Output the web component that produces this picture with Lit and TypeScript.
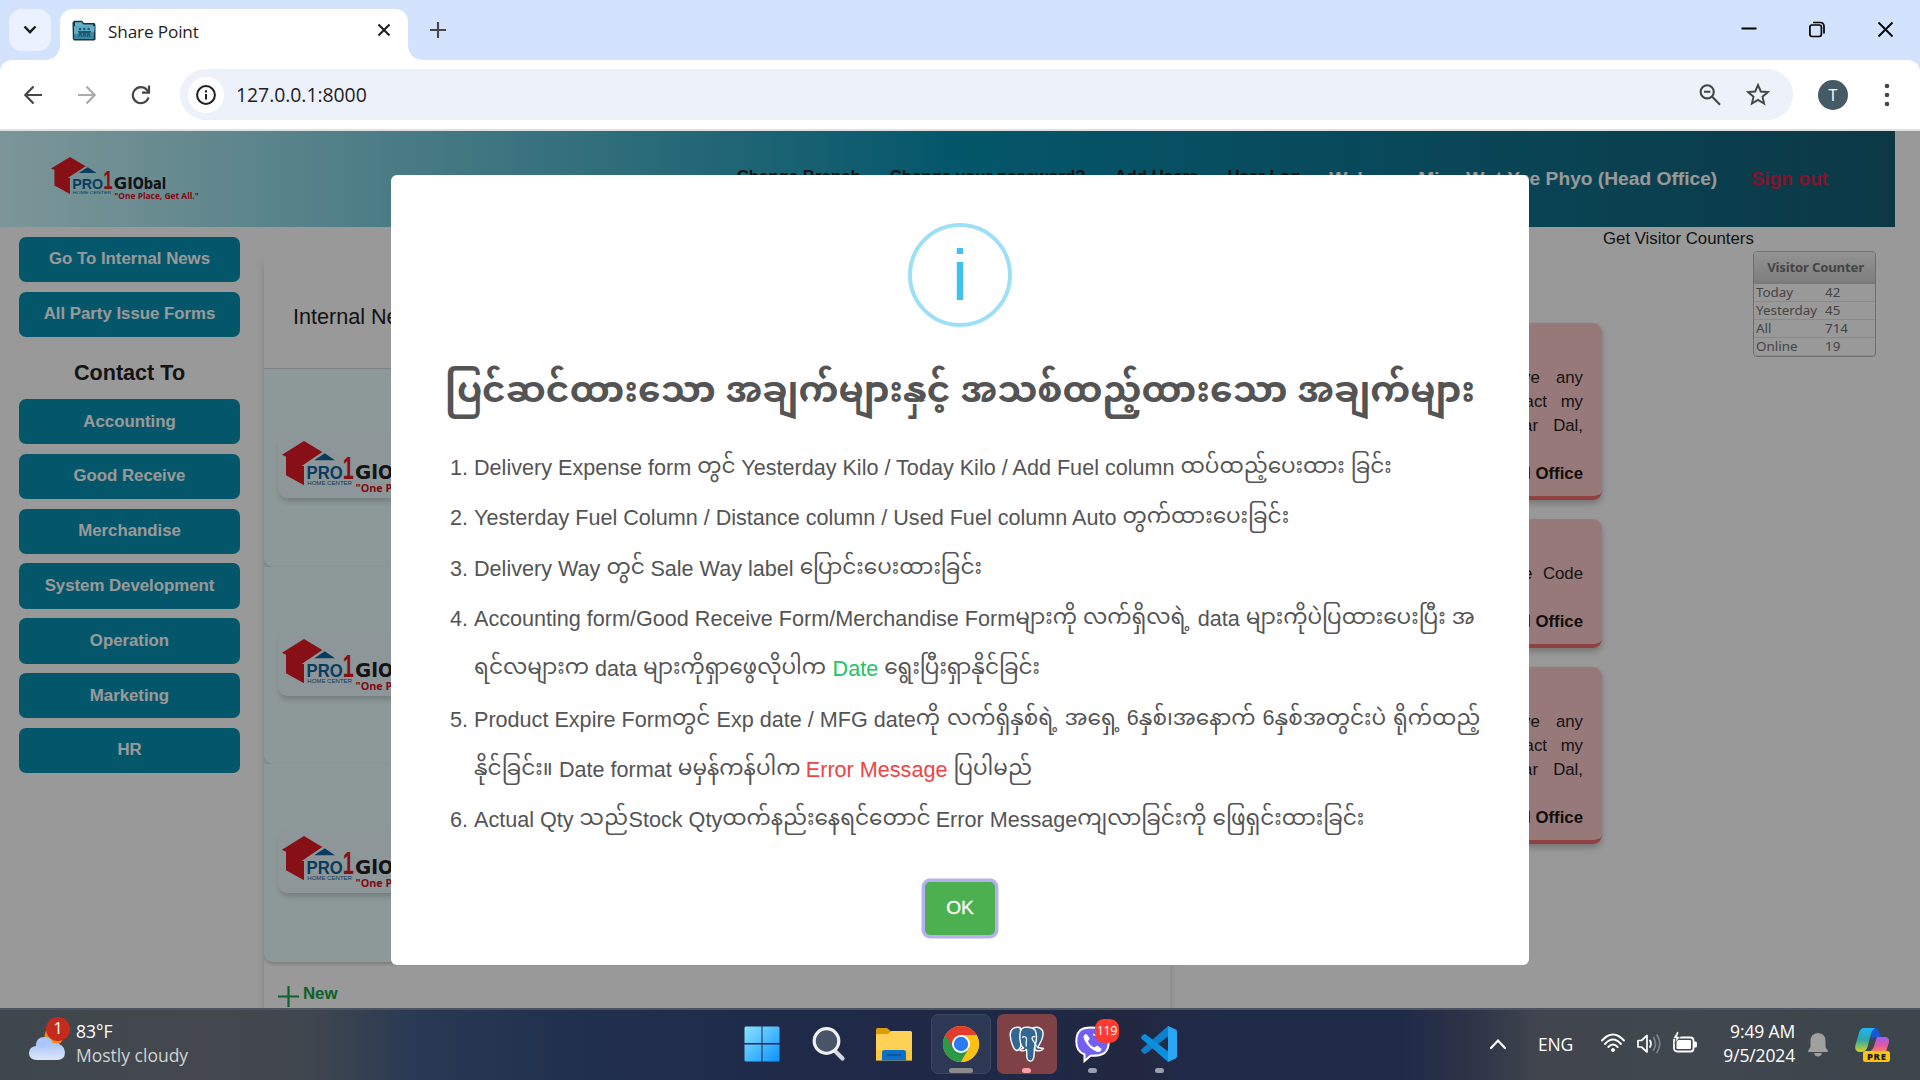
import { LitElement, html, css, svg, nothing } from "lit";
import { customElement, property } from "lit/decorators.js";
import { styleMap } from "lit/directives/style-map.js";
import { classMap } from "lit/directives/class-map.js";

/* ---------- brand logo ---------- */
@customElement("pro-logo")
class ProLogo extends LitElement {
  @property({ type: Boolean }) wide = false;
  static styles = css`
    :host { display: block; }
    svg { display: block; width: 100%; height: 100%; overflow: visible; }
    .pro { font: 700 17.6px "Liberation Sans", sans-serif; fill: #10649f; }
    .one { font: 700 32px "Liberation Sans", sans-serif; fill: #e01b25; }
    .home { font: 400 5.2px "Liberation Sans", sans-serif; fill: #10649f; }
    .global { font: 700 19px "DejaVu Sans", sans-serif; fill: #222226; }
    .tag { font: 700 11px "Open Sans", sans-serif; fill: #d6101c; }
  `;
  render() {
    const w = this.wide;
    return html`<svg viewBox="0 0 172 54" preserveAspectRatio="none">
      <path fill="#e01b25" d="M0 13.7 22 0 40.3 11 19.7 25H22V44.3L4 34.3V15.7Z" />
      <path fill="#10649f" d="M32.3 19.3 42.7 12.3 53 19.3Z" />
      <text class="pro" x="24.6" y="38.4" textLength="36" lengthAdjust="spacingAndGlyphs">PRO</text>
      <text class="one" x="60.8" y="38.4" textLength="11" lengthAdjust="spacingAndGlyphs">1</text>
      <text class="home" x="25.3" y="44" textLength="44.7" lengthAdjust="spacingAndGlyphs">HOME CENTER</text>
      <text class="global" x="73" y="38.4" textLength=${w ? 23 : 22} lengthAdjust="spacingAndGlyphs">Gl</text>
      <text class="global" x=${w ? 96 : 95} y="38.4" textLength=${w ? 46 : 39} lengthAdjust="spacingAndGlyphs">Obal</text>
      <text class="tag" x="73.6" y="51" textLength=${w ? 108 : 98} lengthAdjust="spacingAndGlyphs">"One Place, Get All."</text>
    </svg>`;
  }
}

/* ---------- browser chrome ---------- */
@customElement("browser-chrome")
class BrowserChrome extends LitElement {
  static styles = css`
    :host { display: block; font-family: "Open Sans", "Noto Sans", sans-serif; color: #1f1f1f; }
    svg { display: block; }
    .strip { height: 60px; background: #d3e3fd; display: flex; align-items: flex-start; box-sizing: border-box; padding: 9px 0 0 9px; }
    .search { width: 42px; height: 42px; border-radius: 13px; background: #ebf1fe; display: grid; place-items: center; margin-right: 9px; }
    .tab { position: relative; width: 348px; height: 51px; background: #fff; border-radius: 13px 13px 0 0; box-sizing: border-box; padding: 0 17px 9px 12px; display: flex; align-items: center; }
    .tab::before, .tab::after { content: ""; position: absolute; bottom: 0; width: 14px; height: 14px; }
    .tab::before { right: 100%; background: radial-gradient(circle at 0 0, transparent 13.5px, #fff 14px); }
    .tab::after { left: 100%; background: radial-gradient(circle at 100% 0, transparent 13.5px, #fff 14px); }
    .title { font-size: 17.2px; line-height: 24px; margin: 3px 0 0 12px; flex: 1; letter-spacing: -0.15px; }
    .plus { margin: 13px 0 0 22px; }
    .spacer { flex: 1; }
    .win { display: flex; gap: 51px; margin: 12px 26px 0 0; }
    .bar { height: 69px; background: #fff; border-bottom: 2px solid #dfe0e0; display: flex; align-items: center; border-radius: 12px 12px 0 0; }
    .barwrap { background: linear-gradient(#d3e3fd 30px, #fff 30px); }
    .nav { display: flex; gap: 34px; width: 180px; box-sizing: border-box; padding-left: 23px; }
    .omni { width: 1613px; height: 51px; border-radius: 26px; background: #ecf1fa; display: flex; align-items: center; box-sizing: border-box; padding: 0 23px 0 8px; }
    .info { width: 36px; height: 36px; border-radius: 50%; background: #fff; display: grid; place-items: center; }
    .url { flex: 1; font-size: 19.4px; margin: -1px 0 0 12px; letter-spacing: -0.04px; }
    .tools { display: flex; gap: 24px; }
    .avatar { width: 30px; height: 30px; margin-left: 25px; border-radius: 50%; background: #455a64; color: #fff; display: grid; place-items: center; font-size: 16px; }
    .dots { margin-left: 36px; }
  `;
  render() {
    const s = "#444746";
    return html`
      <div class="strip">
        <div class="search"><svg width="14" height="10" viewBox="0 0 14 10" fill="none" stroke="#1f1f1f" stroke-width="2.5"><path d="M1.5 1.5 7 7.2 12.5 1.5" /></svg></div>
        <div class="tab">
          <svg width="24" height="21" viewBox="0 0 24 21">
            <path d="M.5 2.5 2 .8H10L12 3H22.5L23.5 5V19.5Q23 20.5 22 20.5H2L.8 19Z" fill="#17333f" />
            <path d="M3 2.3H9.5L11.5 4.5H21V7H3Z" fill="#5fb3cb" />
            <path d="M2 6.3H22.6L21.7 19H2.2Z" fill="#3d8aa5" />
            <path d="M2 6.3H22.6L22.2 12 2.1 14Z" fill="#62aec5" />
            <g fill="#1d566d"><circle cx="8" cy="9" r="1.3" /><circle cx="12.3" cy="9" r="1.3" /><circle cx="16.6" cy="9" r="1.3" />
            <path d="M6 11h13v1.6h-1.3l.6 4.4h-1.2l-.5-3-.6 3h-1.2l.4-4h-1.5l.4 4h-1.1l-.6-3-.6 3h-1.1l.4-4H9.600l.4 4H8.800l-.6-3-.6 3H6.400l.6-4.400H6z" /></g>
          </svg>
          <span class="title">Share Point</span>
          <svg width="14" height="14" viewBox="0 0 14 14" stroke="#1f1f1f" stroke-width="2.1"><path d="M1.500 1.500 12.500 12.500M12.500 1.500 1.500 12.500" /></svg>
        </div>
        <svg class="plus" width="16" height="16" viewBox="0 0 16 16" stroke="#444746" stroke-width="2.100"><path d="M8 0V16M0 8H16" /></svg>
        <span class="spacer"></span>
        <div class="win">
          <svg width="17" height="17" viewBox="0 0 17 17"><path d="M.500 7.500H15.500" stroke="#000" stroke-width="2" /></svg>
          <svg width="17" height="17" viewBox="0 0 17 17" fill="none" stroke="#000" stroke-width="1.700"><rect x=".900" y="4" width="11.500" height="11.500" rx="2.200" /><path d="M4 1.500H11Q15 1.500 15 5.500V12.500" /></svg>
          <svg width="17" height="17" viewBox="0 0 17 17" stroke="#000" stroke-width="1.800"><path d="M1.500 1.500 15.500 15.500M15.500 1.500 1.500 15.500" /></svg>
        </div>
      </div>
      <div class="barwrap"><div class="bar">
        <div class="nav">
          <svg width="20" height="20" viewBox="0 0 20 20" fill="none" stroke=${s} stroke-width="2.200"><path d="M19 10H2.500M10.500 1.500 2.300 10 10.500 18.500" /></svg>
          <svg width="20" height="20" viewBox="0 0 20 20" fill="none" stroke="#ababab" stroke-width="2.200"><path d="M1 10H17.500M9.500 1.500 17.700 10 9.500 18.500" /></svg>
          <svg width="20" height="20" viewBox="0 0 20 20" fill="none" stroke=${s} stroke-width="2.200"><path d="M17.500 12.500A8 8 0 1 1 16 5L18 7.200" /><path d="M18 .5V7.600H11" /></svg>
        </div>
        <div class="omni">
          <div class="info"><svg width="20" height="20" viewBox="0 0 20 20"><circle cx="10" cy="10" r="8.900" fill="none" stroke="#1f1f1f" stroke-width="2" /><path d="M10 9V14.500M10 5.300V7.400" stroke="#1f1f1f" stroke-width="2" /></svg></div>
          <span class="url">127.0.0.1:8000</span>
          <div class="tools">
            <svg width="24" height="24" viewBox="0 0 24 24" fill="none" stroke=${s} stroke-width="2.100"><circle cx="9.200" cy="8.800" r="6.600" /><path d="M14 13.600 22 21.800M6 8.800H12.400" /></svg>
            <svg width="24" height="24" viewBox="0 0 24 24" fill="none" stroke=${s} stroke-width="1.900"><path d="M12 2 14.800 8.500 21.800 9.100 16.500 13.700 18.100 20.500 12 16.900 5.900 20.500 7.500 13.700 2.200 9.100 9.200 8.500Z" /></svg>
          </div>
        </div>
        <div class="avatar">T</div>
        <svg class="dots" width="6" height="24" viewBox="0 0 6 24" fill=${s}><circle cx="3" cy="3" r="2.300" /><circle cx="3" cy="12" r="2.300" /><circle cx="3" cy="21" r="2.300" /></svg>
      </div></div>`;
  }
}

/* ---------- page behind the dialog ---------- */
const COUNTERS = [["Today", "42"], ["Yesterday", "45"], ["All", "714"], ["Online", "19"]];
const DEPARTMENTS = ["Accounting", "Good Receive", "Merchandise", "System Development", "Operation", "Marketing", "HR"];
type Line = { text: string; gap: number };
const LONG_NOTE: Line[] = [{ text: "have any", gap: 11.5 }, { text: "contact my", gap: 9 }, { text: "Zar Dal,", gap: 10.5 }];
const NOTICES: { height: number; lines: Line[] }[] = [
  { height: 177, lines: LONG_NOTE },
  { height: 129, lines: [{ text: "the Code", gap: 6 }] },
  { height: 177, lines: LONG_NOTE },
];

@customElement("portal-page")
class PortalPage extends LitElement {
  static styles = css`
    :host { display: block; font: 16.8px/24px "Liberation Sans", Arial, sans-serif; color: #222; background: #fff; }
    .header { width: 1895px; height: 96px; box-sizing: border-box; display: flex; align-items: center; padding: 0 67px 0 51px; background: linear-gradient(to right, #cffafe, #0891b2, #155e75); font-weight: 700; }
    .brand { width: 148px; height: 45px; }
    .links { display: flex; gap: 29px; margin-left: auto; margin-right: 29px; color: #222; padding-bottom: 4px; }
    .welcome { font-size: 19.2px; color: #fff; margin-right: 34px; padding-bottom: 1px; }
    .out { font-size: 19.2px; color: #e11d48; padding-bottom: 1px; }
    .body { display: flex; align-items: flex-start; height: 781px; overflow: hidden; }
    .side { width: 221px; margin: 10px 24px 0 19px; display: flex; flex-direction: column; font-weight: 700; }
    .btn { height: 45.300px; margin-bottom: 9.500px; border-radius: 7px; background: #0891b2; color: #fff; display: flex; align-items: center; justify-content: center; box-sizing: border-box; padding-bottom: .4px; }
    .btn:first-child { padding-bottom: 2px; }
    .contact { font-size: 21.6px; text-align: center; height: 52.500px; line-height: 52px; }
    .news { width: 906px; margin-top: 29px; height: 780px; box-shadow: 0 7px 7px rgba(0,0,0,.16); }
    .newshead { height: 113px; box-sizing: border-box; border-bottom: 1px solid #d6d8dc; padding: 49px 0 0 29px; font-size: 21.6px; }
    .row { height: 197.700px; box-sizing: border-box; background: #ecfeff; border-radius: 0 0 9px 9px; box-shadow: 0 2px 4px rgba(0,0,0,.2); padding: 64px 14px 0; }
    .wrap { overflow: hidden; padding-bottom: 4px; margin-bottom: -4px; background: linear-gradient(#ecfeff 580px, transparent 580px); }
    .plate { width: 200px; height: 65px; box-sizing: border-box; padding: 8px 4px; border-radius: 9px; background: #ecfbfd; box-shadow: 0 5px 6px -2px rgba(0,0,0,.2); }
    .plate pro-logo { width: 172px; height: 54px; }
    .new { display: flex; align-items: center; gap: 4px; color: #16a34a; font-weight: 700; padding: 20px 0 0 14px; height: 24px; }
    .new svg { margin-top: 4px; }
    .notices { width: 400px; margin: 96px 0 0 32px; display: flex; flex-direction: column; gap: 19px; }
    .notice { box-sizing: border-box; padding: 43px 19px 0; background: #fecaca; border-bottom: 4px solid #f26d6d; border-radius: 9px; box-shadow: 0 4px 6px rgba(0,0,0,.22); text-align: right; display: flex; flex-direction: column; }
    .office { margin-top: 24px; font-weight: 700; color: #161616; }
    .visits { display: flex; flex-direction: column; }
    .cap { line-height: 24px; padding-left: 1px; }
    .counter { align-self: flex-start; margin-left: 151px; width: 123px; height: 106px; box-sizing: border-box; border: 1.500px solid #b8b8b8; border-radius: 4px; overflow: hidden; font: 13.400px/16px "Noto Sans", sans-serif; color: #737373; }
    .chead { height: 32px; box-sizing: border-box; border-bottom: 2px solid #cacaca; background: linear-gradient(#f5f5f5, #d2d2d2); text-align: center; line-height: 31px; font-weight: 700; font-size: 13.200px; letter-spacing: -.2px; padding-left: 2px; }
    .crow { display: flex; padding-left: 2px; height: 18px; box-sizing: border-box; border-bottom: 1px solid #e4e4e4; }
    .crow span:first-child { width: 69px; }
  `;
  render() {
    return html`
      <div class="header">
        <pro-logo class="brand"></pro-logo>
        <div class="links"><span>Change Branch</span><span>Change your password?</span><span>Add Users</span><span>User Log</span></div>
        <span class="welcome">Welcome Miss Wut Yee Phyo (Head Office)</span>
        <span class="out">Sign out</span>
      </div>
      <div class="body">
        <div class="side">
          <div class="btn">Go To Internal News</div>
          <div class="btn">All Party Issue Forms</div>
          <div class="contact">Contact To</div>
          ${DEPARTMENTS.map((d) => html`<div class="btn">${d}</div>`)}
        </div>
        <div class="news">
          <div class="newshead">Internal News</div>
          <div class="wrap">${[0, 1, 2].map(() => html`<div class="row"><div class="plate"><pro-logo wide></pro-logo></div></div>`)}</div>
          <div class="new"><svg width="21" height="21" viewBox="0 0 21 21" stroke="#16a34a" stroke-width="2.200"><path d="M10.500 0V21M0 10.500H21" /></svg>New</div>
        </div>
        <div class="notices">
          ${NOTICES.map((n) => html`<div class="notice" style=${styleMap({ height: n.height + "px" })}>
            ${n.lines.map((l) => html`<span style=${styleMap({ wordSpacing: l.gap + "px" })}>${l.text}</span>`)}
            <span class="office">Head Office</span>
          </div>`)}
        </div>
        <div class="visits">
          <span class="cap">Get Visitor Counters</span>
          <div class="counter">
            <div class="chead">Visitor Counter</div>
            ${COUNTERS.map(([k, v]) => html`<div class="crow"><span>${k}</span><span>${v}</span></div>`)}
          </div>
        </div>
      </div>`;
  }
}

/* ---------- dialog ---------- */
type Run = { t: string; w?: number; tone?: "green" | "red"; gap?: number };
const my = (t: string, w: number, gap = 0): Run => ({ t, w, gap });
const en = (t: string, tone?: "green" | "red"): Run => ({ t, tone });
const ITEMS: Run[][][] = [
  [[en("Delivery Expense form "), my("တွင်", 44), en("Yesterday Kilo / Today Kilo / Add Fuel column "), my("ထပ်ထည့်ပေးထား ခြင်း", 211)]],
  [[en("Yesterday Fuel Column / Distance column / Used Fuel column Auto "), my("တွက်ထားပေးခြင်း", 166)]],
  [[en("Delivery Way "), my("တွင်", 44), en("Sale Way label "), my("ပြောင်းပေးထားခြင်း", 182)]],
  [
    [en("Accounting form/Good Receive Form/Merchandise Form"), my("များကို လက်ရှိလရဲ့", 182.5), en("data "), my("များကိုပဲပြထားပေးပြီး အ", 229)],
    [my("ရင်လများက", 121), en("data "), my("များကိုရှာဖွေလိုပါက", 189.5), en("Date ", "green"), my("ရွေးပြီးရှာနိုင်ခြင်း", 156)],
  ],
  [
    [en("Product Expire Form"), my("တွင်", 44.5), en("Exp date / MFG date"), my("ကို လက်ရှိနှစ်ရဲ့ အရှေ့ 6နှစ်၊အနောက် 6နှစ်အတွင်းပဲ ရိုက်ထည့်", 565, 0.9)],
    [my("နိုင်ခြင်း။", 85), en("Date format "), my("မမှန်ကန်ပါက", 128), en("Error Message ", "red"), my("ပြပါမည်", 78)],
  ],
  [[en("Actual Qty "), my("သည်", 49), en("Stock Qty"), my("ထက်နည်းနေရင်တောင်", 213.5), en("Error Message"), my("ကျလာခြင်းကို ဖြေရှင်းထားခြင်း", 287)]],
];

@customElement("notice-dialog")
class NoticeDialog extends LitElement {
  static styles = css`
    :host { display: block; width: 1138px; height: 790px; box-sizing: border-box; background: #fff; border-radius: 6px; padding-top: 48px; color: #545454; font-family: "Liberation Sans", "Noto Sans Myanmar", "Myanmar Text", Padauk, sans-serif; }
    .icon { width: 104px; height: 104px; box-sizing: border-box; margin: 0 auto; border: 4px solid #9de0f6; border-radius: 50%; color: #3fc3ee; font-size: 72px; line-height: 96px; text-align: center; }
    .title { margin-top: 31px; height: 64px; line-height: 64px; font-size: 36px; font-weight: 700; text-align: center; white-space: nowrap; }
    .list { margin: 21px 0 0; padding-left: 59px; font-size: 21.6px; }
    .item { display: flex; }
    .num { width: 24px; }
    .line { display: flex; height: 50.330px; line-height: 50px; white-space: pre; }
    .my { display: block; line-height: 46px; }
    .green { color: #22c55e; }
    .red { color: #ef4444; }
    .ok { width: 70px; height: 53px; margin: 36px auto 0; border-radius: 5px; background: #4caf50; box-shadow: 0 0 0 3.500px #b7b0f0; color: #fff; font-size: 19.200px; line-height: 51px; text-align: center; -webkit-text-stroke: .3px #fff; }
  `;
  render() {
    return html`
      <div class="icon">i</div>
      <div class="title">ပြင်ဆင်ထားသော အချက်များနှင့် အသစ်ထည့်ထားသော အချက်များ</div>
      <div class="list">
        ${ITEMS.map((lines, i) => html`<div class="item"><div class="num"><div class="line">${i + 1}.</div></div><div>
          ${lines.map((runs) => html`<div class="line">${runs.map((r) => html`<span class=${classMap({ my: !!r.w, green: r.tone === "green", red: r.tone === "red" })} style=${r.w ? styleMap({ width: r.w + "px", wordSpacing: (r.gap ?? 0) + "px" }) : nothing}>${r.t}</span>`)}</div>`)}
        </div></div>`)}
      </div>
      <div class="ok">OK</div>`;
  }
}

/* ---------- Windows taskbar ---------- */
const WINDOWS = svg`<defs><linearGradient id="w" x1="0" y1="0" x2="1" y2="1"><stop offset="0" stop-color="#8be3ff"/><stop offset="1" stop-color="#0a93ff"/></linearGradient></defs><path fill="url(#w)" d="M1.500.500H17.500V17H.500V1.500ZM18.500.500H34.500L35.500 1.500V17H18.500ZM.500 18.500H17.500V35.500H1.500L.500 34.500ZM18.500 18.500H35.500V34.500L34.500 35.500H18.500Z"/>`;
const SEARCH = svg`<path d="M25 25 32.500 32.500" stroke="#d6d8dc" stroke-width="4.200" stroke-linecap="round"/><circle cx="16.500" cy="15" r="12.300" fill="#4a5468" stroke="#eef0f2" stroke-width="3.200"/>`;
const FOLDER = svg`<path fill="#dd9b07" d="M0 3.500Q0 2 1.500 2H11L14.500 5V12H0Z"/><path fill="#ffd257" d="M0 8H12L15 5H34.500Q36 5 36 6.500V34.500H0Z"/><path fill="#f9be25" d="M0 24H36V33.500Q36 34.500 35 34.500H1Q0 34.500 0 33.500Z" opacity=".5"/><path fill="#0f6fc6" d="M6 34.500V26.500Q6 24 8.500 24H27.500Q30 24 30 26.500V34.500Z"/><path d="M11 29H25" stroke="#0a4f93" stroke-width="1.500"/>`;
const CHROME = svg`<circle cx="18" cy="18" r="18" fill="#fbc116"/><path fill="#2a9a48" d="M2.410 9A18 18 0 0 0 18 36L26 22.500 18 18Z"/><path fill="#fbc116" d="M18 9H33.590A18 18 0 0 1 18 36L25.800 22.500Z"/><path fill="#e33b2e" d="M2.410 9A18 18 0 0 1 33.590 9H18L10.200 22.500Z"/><circle cx="18" cy="18" r="9" fill="#fff"/><circle cx="18" cy="18" r="7.200" fill="#2d7bf0"/>`;
const ELEPHANT = svg`<g fill="#336791" stroke="#fff" stroke-width="1.400" stroke-linejoin="round"><path d="M11 1.500C5 .300 1 3.500 1.200 9 1.500 15 4.500 24 7.500 24.500 9.500 24.800 11.500 21 11.500 21L13 10Z"/><path d="M24 2C29 0 35 2.500 34 9 33.200 14 30.500 18.500 28.500 21.500L34.500 22.500C33 25 29 25.500 26 24Z"/><path d="M13 2.500C16 .500 23 .500 26 4 28 8 27.500 15 26 19.500 24.500 24 26 30 24 33.500 22.500 36 18.500 35.500 18 32 17.500 29 18 25 17.500 23.500 15 25.500 12.500 25 10.500 23.800L14.500 22C10.500 20 9.500 6 13 2.500Z"/></g><g fill="none" stroke="#fff" stroke-width="1.200"><path d="M13 11.500C15 10 17.500 10.500 17.500 13 17.500 16 16.500 18 17.500 20.500M26.500 11C25 10 23 10.500 23 12.500 24 15.500 26.500 17 27.500 20.500"/></g>`;
const VIBER = svg`<path fill="#7360f2" stroke="#fff" stroke-width="2" d="M16 1.500C6 1.500 1.500 5 1.300 15 1.200 22 3.500 26.500 9.500 28.500V35L15.500 29.800C28 30 33.500 27 33.800 16 34 5 28 1.500 16 1.500Z"/><path fill="#fff" d="M11.500 8 14.500 12C15 14 12.500 14.500 13.300 16 14.500 18.500 17 20.500 19 21.200 20.500 21.500 21 19.500 22.500 19.800L26.500 22.800C27 25 24 26.500 22.500 26 15 23 9.500 16.500 8.500 11 8.500 9 10.500 7.500 11.500 8Z"/><path d="M18 8.500C22 9 24 11.500 24.300 15" fill="none" stroke="#fff" stroke-width="1.300"/>`;
const VSCODE = svg`<path fill="#0d7fcb" d="M27 0 27 10.500 5 27.500Q3.500 28.500 2.500 27.500L.500 25.500Q-.500 24.500.500 23.300Z"/><path fill="#0b8fdd" d="M27 36V25.500L5 8.500Q3.500 7.500 2.500 8.500L.500 10.500Q-.500 11.500.500 12.700Z"/><path fill="#2aa7f5" d="M27 0 34.800 3.600Q36 4.300 36 5.500V30.500Q36 31.700 34.800 32.400L27 36Z"/>`;

@customElement("app-tile")
class AppTile extends LitElement {
  @property() tone = "";
  @property() mark = "";
  @property() badge = "";
  @property({ attribute: false }) icon: unknown;
  static styles = css`
    :host { display: block; }
    .tile { position: relative; width: 60px; height: 60px; box-sizing: border-box; border-radius: 7px; display: grid; place-items: center; }
    .active { background: #2d3854; border: 1.500px solid #3b4661; }
    .alert { background: #7e4246; }
    svg { width: 36px; height: 36px; overflow: visible; }
    .mark { position: absolute; bottom: 1px; left: 50%; width: 9px; height: 5px; margin-left: -4.500px; border-radius: 3px; background: #9a9fae; }
    .wide { width: 24px; margin-left: -12px; bottom: 0; background: #8b8b8b; }
    .pink { background: #ff9daa; }
    .badge { position: absolute; top: 5px; left: 32px; width: 24px; height: 24px; border-radius: 9px; background: #ff3b30; color: #fff; font: 12.500px/23px "Open Sans", sans-serif; text-align: center; letter-spacing: -.4px; }
  `;
  render() {
    return html`<div class="tile ${this.tone}">
      <svg viewBox="0 0 36 36">${this.icon}</svg>
      ${this.mark ? html`<span class="mark ${this.mark}"></span>` : nothing}
      ${this.badge ? html`<span class="badge">${this.badge}</span>` : nothing}
    </div>`;
  }
}

@customElement("task-bar")
class TaskBar extends LitElement {
  static styles = css`
    :host { display: flex; align-items: flex-start; height: 72px; box-sizing: border-box; border-top: 2px solid #4c525f; color: #fff; font: 17.500px/24px "Open Sans", "Noto Sans", sans-serif; background: linear-gradient(to right, #3e474d 0, #44484e 200px, #40464f 310px, #2a3a54 410px, #22304f 560px, #1f2a49 800px, #1f2844 1060px, #22273f 1130px, #202b49 1200px, #1f2a49 1400px, #2e3447 1470px, #40454e 1540px, #40474e 1700px, #3c454b 1920px); }
    svg { display: block; overflow: visible; }
    .weather { display: flex; width: 705px; box-sizing: border-box; padding: 9px 0 0 29px; }
    .cloud { position: relative; width: 36px; height: 48px; margin-right: 11px; }
    .count { position: absolute; left: 17px; top: -2px; width: 24px; height: 24px; border-radius: 50%; background: #c42b1c; text-align: center; line-height: 23px; font-size: 16px; }
    .sub { color: #d0d2d4; }
    .apps { display: flex; gap: 6.200px; padding-top: 4px; margin-left: 27px; }
    .tray { margin-left: auto; display: flex; padding-right: 31px; align-items: flex-start; }
    .eng { margin: 22px 28px 0 32px; letter-spacing: -.2px; }
    .time { width: 98px; text-align: right; padding-top: 9px; letter-spacing: -.15px; }
    .chev { margin-top: 29px; }
    .wifi { margin-top: 23px; } .vol { margin: 24px 12px 0; } .bat { margin-top: 22px; }
    .bell { margin: 23px 27px 0 13px; } .pilot { margin-top: 18px; }
    .pre { font: 800 9.500px "Open Sans", sans-serif; letter-spacing: .6px; fill: #1c1c1c; }
  `;
  render() {
    return html`
      <div class="weather">
        <div class="cloud">
          <svg width="36" height="48" viewBox="0 0 36 48">
            <defs><linearGradient id="c" x1="0" y1="0" x2="0" y2="1"><stop offset="0" stop-color="#a9c4fb" /><stop offset="1" stop-color="#dbe6f8" /></linearGradient></defs>
            <circle cx="25" cy="17" r="9.500" fill="#f58a12" />
            <path fill="#adc6fa" d="M7 28C6 20 12 17.500 16 18 22 18.500 25 23 24 30L12 35Z" />
            <path fill="url(#c)" d="M7 27Q10 26 14 29 17 24 24 24 35 24 36 33 36 41 28 41H8Q0 41 0 34 0 28 7 27Z" />
          </svg>
          <span class="count">1</span>
        </div>
        <div><div>83°F</div><div class="sub">Mostly cloudy</div></div>
      </div>
      <div class="apps">
        ${[
          { icon: WINDOWS }, { icon: SEARCH }, { icon: FOLDER },
          { icon: CHROME, tone: "active", mark: "wide" },
          { icon: ELEPHANT, tone: "alert", mark: "pink" },
          { icon: VIBER, mark: "small", badge: "119" },
          { icon: VSCODE, mark: "small" },
        ].map((a) => html`<app-tile .icon=${a.icon} .tone=${a.tone ?? ""} .mark=${a.mark ?? ""} .badge=${a.badge ?? ""}></app-tile>`)}
      </div>
      <div class="tray">
        <svg class="chev" width="16" height="10" viewBox="0 0 16 10" fill="none" stroke="#fff" stroke-width="2.200" stroke-linecap="round"><path d="M1 9 8 1.500 15 9" /></svg>
        <span class="eng">ENG</span>
        <svg class="wifi" width="24" height="20" viewBox="0 0 24 20" fill="none" stroke="#fff" stroke-width="1.900" stroke-linecap="round"><path d="M1 7.500Q12-4.500 23 7.500M4 11Q12 2 20 11M7.300 14Q12 9 16.700 14" /><circle cx="12" cy="17" r="1.500" fill="#fff" stroke-width="1" /></svg>
        <svg class="vol" width="24" height="20" viewBox="0 0 24 20" fill="none" stroke="#fff" stroke-width="1.700" stroke-linecap="round" stroke-linejoin="round"><path d="M1 6.500H4.500L10 1.500V18L4.500 13H1ZM13 6.500Q15 9.700 13 13" /><path stroke="#7d8287" d="M16.500 3.500Q20.500 9.700 16.500 16M20 1Q25.500 9.700 20 18.500" /></svg>
        <svg class="bat" width="24" height="21" viewBox="0 0 24 21"><rect x="1" y="5.500" width="19.500" height="14" rx="3" fill="none" stroke="#fff" stroke-width="1.800" /><rect x="3.500" y="8" width="14.500" height="9" rx="1" fill="#fff" /><path d="M21 9.500H22.500Q24 9.500 24 11V14Q24 15.500 22.500 15.500H21Z" fill="#fff" /><path d="M4-.500 0 6.500H3L2 11.500 7.500 4.500H4.500L6-.500Z" fill="#fff" stroke="#40474e" stroke-width=".8" /></svg>
        <div class="time"><div>9:49 AM</div><div>9/5/2024</div></div>
        <svg class="bell" width="20" height="24" viewBox="0 0 20 24" fill="#a0a09e"><path d="M10 0Q17.500.500 17.500 8V14L20 18Q20 19 19 19H1Q0 19 0 18L2.500 14V8Q2.500.500 10 0ZM6 20H14Q13 23.500 10 23.500 7 23.500 6 20Z" /></svg>
        <svg class="pilot" width="34" height="34" viewBox="0 0 34 34">
          <defs>
            <linearGradient id="a" x1="0" y1="0" x2="0" y2="1"><stop offset="0" stop-color="#1fb6f5" /><stop offset=".5" stop-color="#2fa6a8" /><stop offset="1" stop-color="#d6d326" /></linearGradient>
            <linearGradient id="b" x1="0" y1="0" x2="0" y2="1"><stop offset="0" stop-color="#a45cf0" /><stop offset=".6" stop-color="#e8579f" /><stop offset="1" stop-color="#ff8a4c" /></linearGradient>
          </defs>
          <path fill="#1a55d8" d="M14 0H20Q23 0 24 4L26 9H21Q18 9 17 12Z" />
          <path fill="url(#b)" d="M22 9H30Q34.500 9 34 14L31 24H14Q18 22 19 18Z" />
          <path fill="url(#a)" d="M9 0H20Q17 2 16 6L12.500 19Q11 24 6 24H4Q-.500 23 .200 18L4 5Q5.500 0 9 0Z" />
          <rect x="8" y="23" width="27" height="11" rx="2.500" fill="#ffc40c" />
          <text class="pre" x="12" y="32">PRE</text>
        </svg>
      </div>`;
  }
}

@customElement("app-root")
class AppRoot extends LitElement {
  static styles = css`
    :host { display: block; width: 1920px; height: 1080px; overflow: hidden; }
    .view { position: relative; height: 877px; }
    portal-page { height: 877px; }
    .backdrop { position: absolute; inset: 0; background: rgba(0, 0, 0, .4); display: grid; place-items: center; padding-top: 1px; box-sizing: border-box; }
  `;
  render() {
    return html`
      <browser-chrome></browser-chrome>
      <div class="view"><portal-page></portal-page><div class="backdrop"><notice-dialog></notice-dialog></div></div>
      <task-bar></task-bar>`;
  }
}
